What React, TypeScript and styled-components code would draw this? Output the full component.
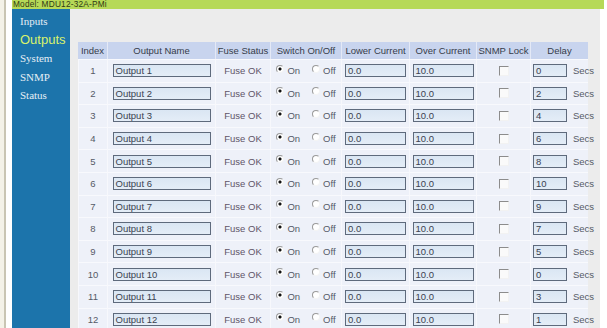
import styled, { createGlobalStyle } from 'styled-components'

const Global = createGlobalStyle`
  html, body {
    margin: 0;
    padding: 0;
    background: #ffffff;
    overflow: hidden;
  }
`

const Page = styled.div`
  display: flex;
  width: 607px;
  height: 328px;
  overflow: hidden;
  background: #ffffff;
`

const Edge = styled.div`
  width: 12px;
  flex: none;
  background: linear-gradient(to right, #f4f2e8 0, #f4f2e8 4px, #c9c5b3 4px, #c9c5b3 6px, #ffffff 6px);
`

const Main = styled.div`
  flex: 1;
  display: flex;
  flex-direction: column;
  min-width: 0;
`

const TopBar = styled.div`
  height: 9px;
  margin-right: 3px;
  background: #b6d957;
  font-family: Tahoma, 'Liberation Sans', Arial, sans-serif;
  font-size: 8.3px;
  line-height: 9px;
  color: #2f3a14;
  padding-left: 1px;
  letter-spacing: 0.2px;
`

const Body = styled.div`
  flex: 1;
  display: flex;
  min-height: 0;
`

const Sidebar = styled.div`
  width: 58px;
  flex: none;
  background: #1c74ab;
  padding: 3px 0 0 8px;
  box-sizing: border-box;
  display: flex;
  flex-direction: column;
`

const NavItem = styled.div<{ $active?: boolean }>`
  font-family: ${p => (p.$active ? "Tahoma, 'Liberation Sans', Arial, sans-serif" : "'Liberation Serif', 'Times New Roman', serif")};
  font-size: ${p => (p.$active ? '13px' : '11px')};
  color: ${p => (p.$active ? '#d9f26b' : '#e6eef5')};
  line-height: 18.5px;
  height: 18.5px;
`

const Content = styled.div`
  flex: 1;
  background: #ececec;
  padding: 33px 0 0 8px;
  margin-right: 7px;
  box-sizing: border-box;
  overflow: hidden;
`

const Table = styled.div`
  width: 510px;
  display: grid;
  grid-template-columns: 29px 108px 55px 71px 68px 67px 54px 58px;
  font-family: Tahoma, 'Liberation Sans', Arial, sans-serif;
  font-size: 9.5px;
  color: #555a66;
`

const Head = styled.div`
  background: #c8d4ee;
  height: 17px;
  display: flex;
  align-items: center;
  justify-content: center;
  color: #363c4a;
  border-left: 1px solid #e4e9f6;
  white-space: nowrap;
  &:first-child { border-left: none; }
`

const Cell = styled.div<{ $align?: string }>`
  background: #eef1f9;
  height: 22.6px;
  box-sizing: border-box;
  display: flex;
  align-items: center;
  justify-content: ${p => p.$align || 'center'};
  border-left: 1px solid #f7f8fc;
  border-top: 1px solid #f8f9fd;
  white-space: nowrap;
  padding: 0 2px;
`

const Field = styled.div<{ $w: number }>`
  width: ${p => p.$w}px;
  height: 13px;
  flex: none;
  box-sizing: border-box;
  border: 1px solid #5e6a7c;
  background: linear-gradient(#dae6f3, #e4edf7);
  font-size: 9.5px;
  line-height: 11px;
  padding-left: 2px;
  color: #3a4250;
  text-align: left;
`

const Fuse = styled.span`
  color: #5e5468;
`

const Radio = styled.span<{ $on?: boolean }>`
  display: inline-block;
  width: 8px;
  height: 8px;
  border-radius: 50%;
  box-sizing: border-box;
  border: 1px solid;
  border-color: #9a9a9a #f4f4f4 #f4f4f4 #9a9a9a;
  background: ${p => (p.$on ? 'radial-gradient(circle, #111 0, #111 1.3px, #fff 1.8px)' : '#fff')};
  margin-right: 3px;
  position: relative;
  top: -2px;
`

const Choice = styled.span`
  display: inline-flex;
  align-items: center;
  color: #555a68;
  font-size: 9.5px;
  margin: 0 6px;
`

const Check = styled.span`
  display: inline-block;
  width: 10px;
  height: 10px;
  box-sizing: border-box;
  border: 1px solid;
  border-color: #8c8c8c #f2f2f2 #f2f2f2 #8c8c8c;
  background: #fafafa;
`

const Secs = styled.span`
  margin-left: 6px;
  color: #555a66;
`

const delays = [0, 2, 4, 6, 8, 10, 9, 7, 5, 0, 3, 1]
const headers = ['Index', 'Output Name', 'Fuse Status', 'Switch On/Off', 'Lower Current', 'Over Current', 'SNMP Lock', 'Delay']

export default function App () {
  return (
    <>
      <Global />
      <Page>
        <Edge />
        <Main>
          <TopBar>Model: MDU12-32A-PMi</TopBar>
          <Body>
            <Sidebar>
              <NavItem>Inputs</NavItem>
              <NavItem $active>Outputs</NavItem>
              <NavItem>System</NavItem>
              <NavItem>SNMP</NavItem>
              <NavItem>Status</NavItem>
            </Sidebar>
            <Content>
              <Table>
                {headers.map(h => <Head key={h}>{h}</Head>)}
                {delays.map((d, i) => (
                  <Row key={i} index={i + 1} delay={d} />
                ))}
              </Table>
            </Content>
          </Body>
        </Main>
      </Page>
    </>
  )
}

const Row = ({ index, delay }: { index: number, delay: number }) => (
  <>
    <Cell>{index}</Cell>
    <Cell><Field $w={98}>Output {index}</Field></Cell>
    <Cell><Fuse>Fuse OK</Fuse></Cell>
    <Cell>
      <Choice><Radio $on />On</Choice>
      <Choice><Radio />Off</Choice>
    </Cell>
    <Cell><Field $w={61}>0.0</Field></Cell>
    <Cell><Field $w={61}>10.0</Field></Cell>
    <Cell><Check /></Cell>
    <Cell $align='flex-start'><Field $w={34}>{delay}</Field><Secs>Secs</Secs></Cell>
  </>
)
